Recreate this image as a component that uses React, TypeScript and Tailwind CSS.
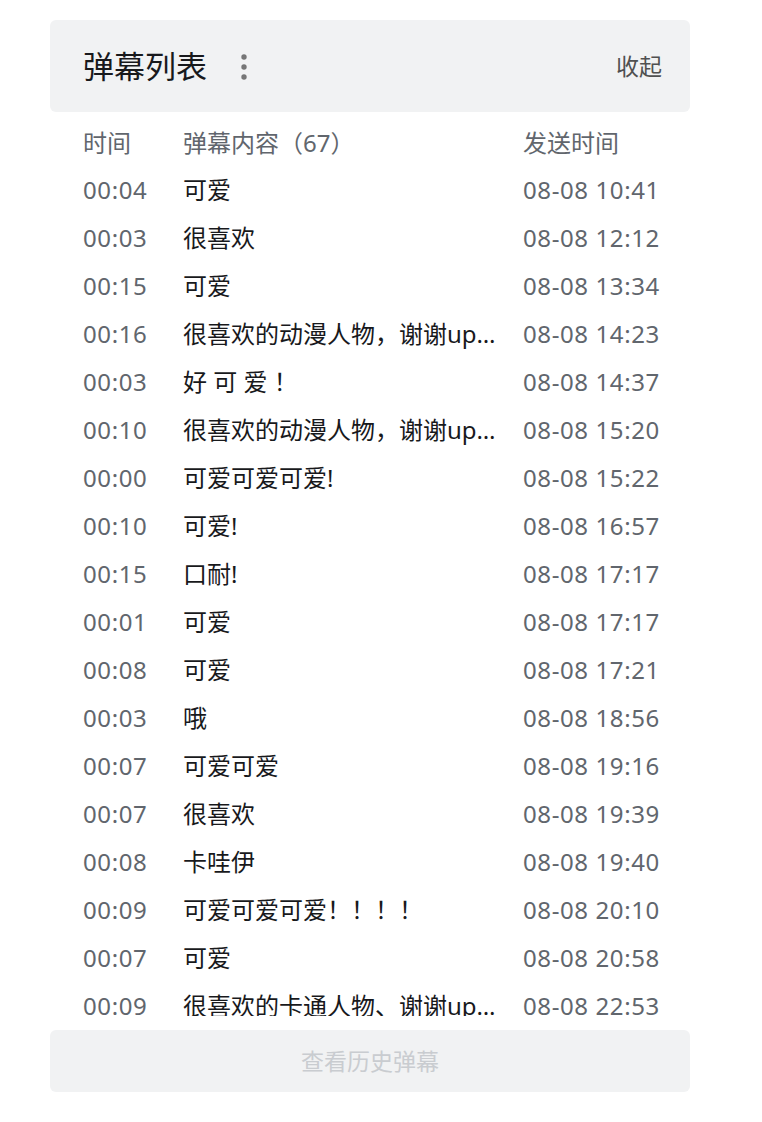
import React from "react";

const rows = [
  { t: "00:04", c: "可爱", s: "08-08 10:41" },
  { t: "00:03", c: "很喜欢", s: "08-08 12:12" },
  { t: "00:15", c: "可爱", s: "08-08 13:34" },
  { t: "00:16", c: "很喜欢的动漫人物，谢谢up主分享", s: "08-08 14:23" },
  { t: "00:03", c: "好 可 爱 ！", s: "08-08 14:37" },
  { t: "00:10", c: "很喜欢的动漫人物，谢谢up主分享", s: "08-08 15:20" },
  { t: "00:00", c: "可爱可爱可爱!", s: "08-08 15:22" },
  { t: "00:10", c: "可爱!", s: "08-08 16:57" },
  { t: "00:15", c: "口耐!", s: "08-08 17:17" },
  { t: "00:01", c: "可爱", s: "08-08 17:17" },
  { t: "00:08", c: "可爱", s: "08-08 17:21" },
  { t: "00:03", c: "哦", s: "08-08 18:56" },
  { t: "00:07", c: "可爱可爱", s: "08-08 19:16" },
  { t: "00:07", c: "很喜欢", s: "08-08 19:39" },
  { t: "00:08", c: "卡哇伊", s: "08-08 19:40" },
  { t: "00:09", c: "可爱可爱可爱！！！！", s: "08-08 20:10" },
  { t: "00:07", c: "可爱", s: "08-08 20:58" },
  { t: "00:09", c: "很喜欢的卡通人物、谢谢up主分享", s: "08-08 22:53" },
];

function DotsIcon() {
  return (
    <svg width="8" height="28" viewBox="0 0 8 28" className="text-[#767676]">
      <circle cx="4" cy="4" r="2.7" fill="currentColor" />
      <circle cx="4" cy="14" r="2.7" fill="currentColor" />
      <circle cx="4" cy="24" r="2.7" fill="currentColor" />
    </svg>
  );
}

export default function App() {
  return (
    <div
      className="min-h-screen bg-white pt-5 pl-[50px]"
      style={{ fontFamily: '"Noto Sans", "Noto Sans CJK SC", sans-serif' }}
    >
      <div className="w-[640px]">
        {/* header */}
        <div className="flex h-[92px] items-center justify-between rounded-md bg-[#f1f2f3] pl-[33px] pr-[28px]">
          <div className="flex items-center">
            <span className="text-[31px] leading-none text-[#18191c]">弹幕列表</span>
            <span className="ml-[33px] flex items-center pt-[2px]">
              <DotsIcon />
            </span>
          </div>
          <button className="text-[23px] leading-none text-[#505050]">收起</button>
        </div>

        {/* list */}
        <div className="h-[904px] overflow-hidden pl-[33px] pt-2">
          <div className="grid h-[46px] grid-cols-[100px_340px_1fr] items-center text-[24px] text-[#61666d]">
            <span>时间</span>
            <span>弹幕内容（67）</span>
            <span>发送时间</span>
          </div>
          {rows.map((r, i) => (
            <div
              key={i}
              className="grid h-[48px] grid-cols-[100px_340px_1fr] items-center text-[24px]"
            >
              <span className="tracking-[0.6px] text-[#61666d]">{r.t}</span>
              <span className="truncate pr-[16px] text-[#18191c]">{r.c}</span>
              <span className="tracking-[0.6px] text-[#61666d]">{r.s}</span>
            </div>
          ))}
        </div>

        {/* footer */}
        <button className="mt-[14px] flex h-[62px] w-full items-center justify-center rounded-md bg-[#f1f2f3] text-[23px] text-[#c9ccd0]">
          查看历史弹幕
        </button>
      </div>
    </div>
  );
}
